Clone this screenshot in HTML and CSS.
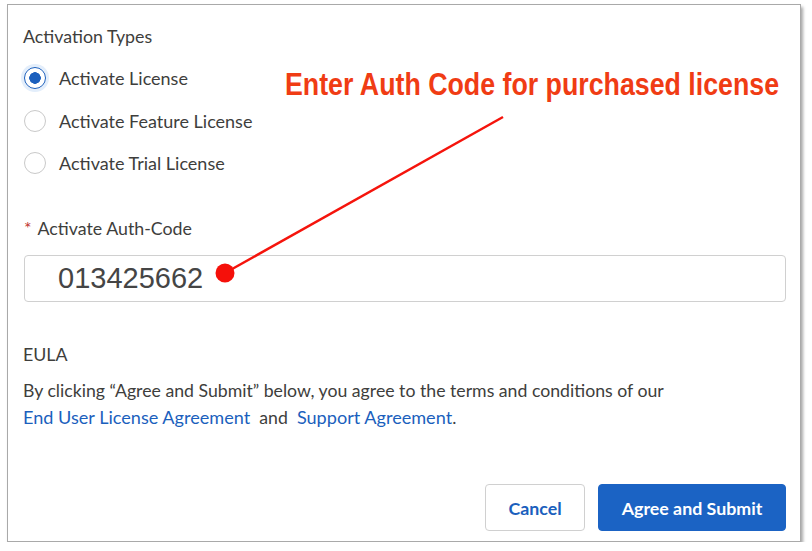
FILE: index.html
```html
<!DOCTYPE html>
<html lang="en">

<head>
  <meta charset="UTF-8">
  <meta name="viewport" content="width=device-width, initial-scale=1.0">
  <title>Activate License</title>
  <link rel="stylesheet" href="styles.css">
</head>

<body>
  <section class="dialog">
    <div class="field">
      <div class="legend">Activation Types</div>
      <label class="radio checked"><span class="dot"></span>Activate License</label>
      <label class="radio"><span class="dot"></span>Activate Feature License</label>
      <label class="radio"><span class="dot"></span>Activate Trial License</label>
    </div>

    <div class="field auth">
      <div class="legend"><abbr class="req">*</abbr>Activate Auth-Code</div>
      <div class="input">013425662</div>
    </div>

    <div class="eula">
      <div class="legend">EULA</div>
      <p>By clicking “Agree and Submit” below, you agree to the terms and conditions of our<br>
        <a href="#">End User License Agreement</a>&nbsp; and &nbsp;<a href="#">Support Agreement</a>.</p>
    </div>

    <div class="footer">
      <button class="btn">Cancel</button>
      <button class="btn brand">Agree and Submit</button>
    </div>

    <!-- annotation drawn on top of the screenshot -->
    <div class="note">Enter Auth Code for purchased license</div>
    <svg class="arrow" width="812" height="551" viewBox="0 0 812 551">
      <line x1="225" y1="273" x2="503" y2="117" stroke="#f5140c" stroke-width="2.5" />
      <circle cx="225" cy="273" r="9.5" fill="#f5100a" />
    </svg>
  </section>
</body>

</html>
```

FILE: styles.css
```css
*{margin: 0; padding: 0; box-sizing: border-box;}
a{text-decoration: 0;}
body{
  background: #fff;
  font-family: Lato, "Open Sans", sans-serif;
  color: #3e3e3c;
}

.dialog{
  width: 794px;
  height: 538px;
  margin: 4px 0 0 7px;
  padding: 21px 14px 10px 15px;
  border: 1px solid #a9a9a9;
  box-shadow: 2px 3px 3px rgba(0,0,0,.35);
  display: flex;
  flex-direction: column;
}

.legend{
  font-size: 17.8px;
  line-height: 20px;
  color: #3e3e3c;
}

/* radios */
.field{
  display: flex;
  flex-direction: column;
}
.radio{
  display: flex;
  align-items: center;
  gap: 13px;
  height: 42.5px;
  font-size: 18px;
  color: #3e3e3c;
}
.field .legend + .radio{
  margin-top: 11px;
}
.dot{
  width: 22px;
  height: 22px;
  margin-left: 1px;
  border: 1px solid #c9c9c9;
  border-radius: 50%;
  background: #fff;
  flex: none;
}
.checked .dot{
  border: 1.5px solid #1b5fbd;
  box-shadow: 0 0 0 3px #e3eefb;
  background: radial-gradient(circle, #1b5fbd 0 5.5px, #fff 6px);
}

/* auth code */
.auth{
  margin-top: 33px;
}
.req{
  color: #c23934;
  text-decoration: none;
  margin: 0 6px 0 1px;
}
.input{
  margin-top: 17px;
  margin-left: 1px;
  height: 47px;
  border: 1px solid #d0d0d0;
  border-radius: 4px;
  padding-left: 33px;
  font-family: "Liberation Sans", Arial, sans-serif;
  font-size: 29px;
  line-height: 44px;
  color: #454545;
}

/* eula */
.eula{
  margin-top: 42px;
}
.eula p{
  margin-top: 14px;
  font-size: 17.7px;
  line-height: 26px;
  color: #3e3e3c;
}
.eula a{
  font-size: 18.1px;
  color: #1b5fbd;
}

/* buttons */
.footer{
  margin-top: auto;
  display: flex;
  justify-content: flex-end;
  gap: 13px;
}
.btn{
  width: 100px;
  height: 47px;
  border: 1px solid #d0d0d0;
  border-radius: 4px;
  background: #fff;
  font-family: Lato, sans-serif;
  font-weight: bold;
  font-size: 17.8px;
  color: #1b5fbd;
}
.btn.brand{
  width: 188px;
  background: #1b63c4;
  border-color: #1b63c4;
  color: #fff;
}

/* annotation */
.note{
  position: absolute;
  left: 285px;
  top: 67px;
  font-family: "Liberation Sans", Arial, sans-serif;
  font-weight: bold;
  font-size: 31px;
  line-height: 36px;
  color: #f03c14;
  white-space: nowrap;
  transform: scaleX(0.863);
  transform-origin: left center;
}
.arrow{
  position: absolute;
  left: 0;
  top: 0;
  pointer-events: none;
}
```
